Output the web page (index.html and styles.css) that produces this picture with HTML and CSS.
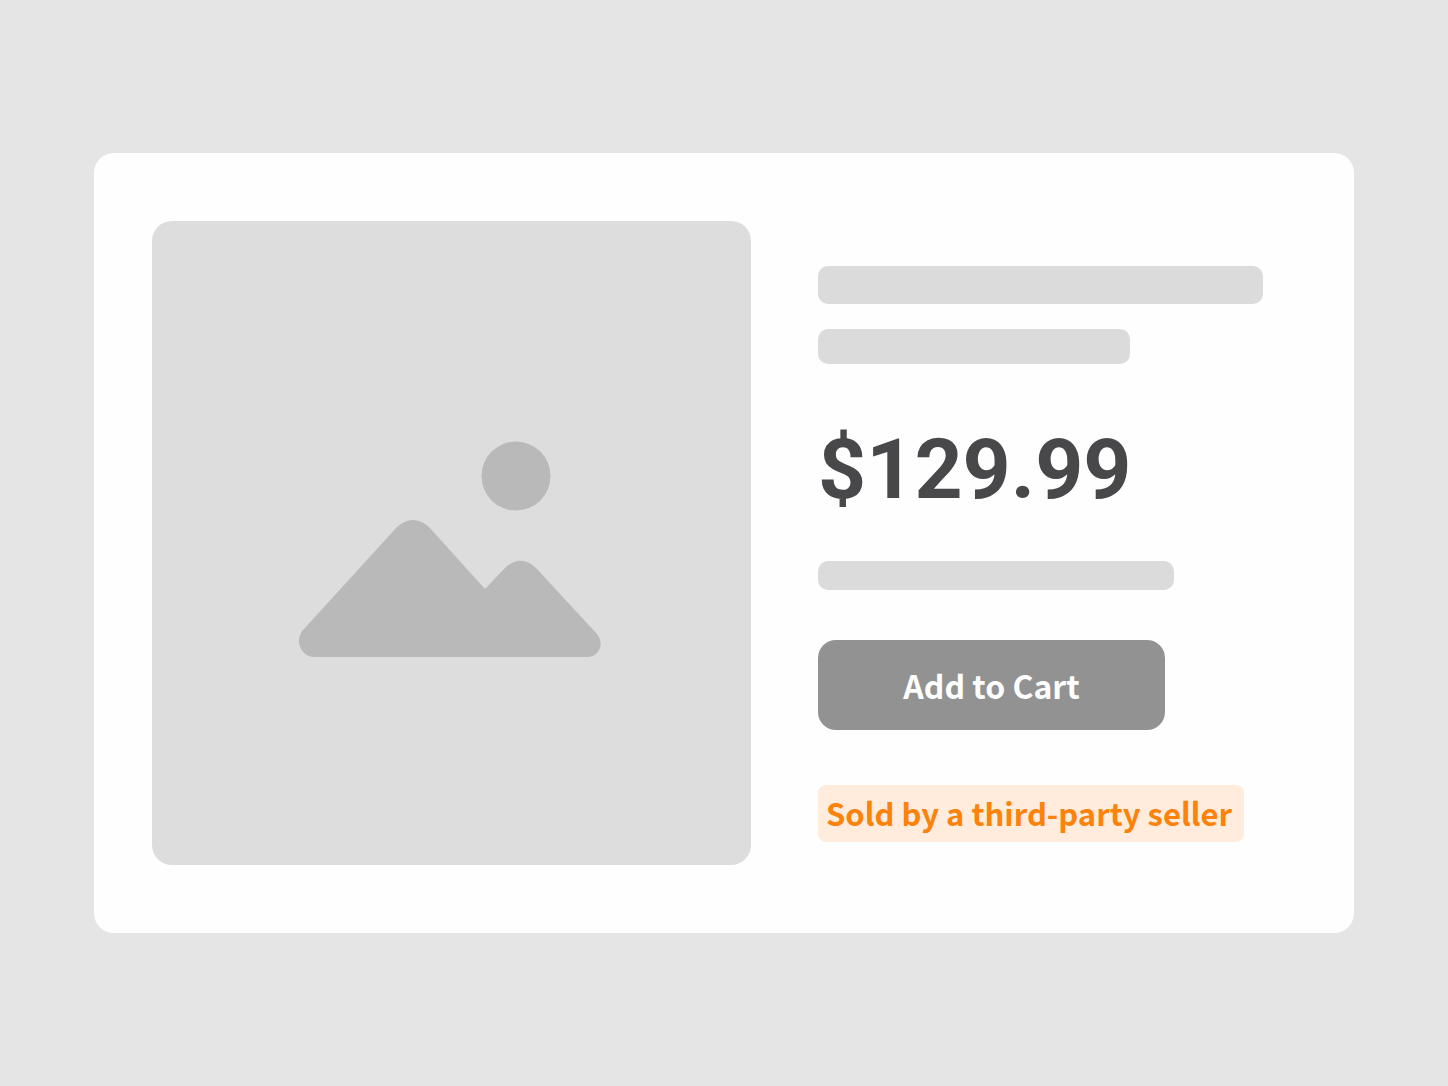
FILE: index.html
```html
<!DOCTYPE html>
<html lang="en">
<head>
<meta charset="utf-8">
<meta name="viewport" content="width=device-width, initial-scale=1">
<title>Product</title>
<link rel="stylesheet" href="styles.css">
</head>
<body>
<main class="card">
  <div class="photo">
    <svg class="photo-icon" viewBox="299 441 302 216" aria-hidden="true">
      <circle cx="516" cy="476" r="34.5"/>
      <path d="M397 527Q413 513 429 527L485 589L504 569Q520 553 536 568L597 634C605 644 599 657 587 657H315C301 657 294 641 303 630Z"/>
    </svg>
  </div>
  <section class="details">
    <div class="bar bar-title"></div>
    <div class="bar bar-subtitle"></div>
    <p class="price">$129.99</p>
    <div class="bar bar-note"></div>
    <button class="cart" type="button">Add to Cart</button>
    <p class="seller">Sold by a third-party seller</p>
  </section>
</main>
</body>
</html>
```

FILE: styles.css
```css
* {
  box-sizing: border-box;
}

body {
  margin: 0;
  min-height: 100vh;
  display: flex;
  align-items: center;
  padding: 48px 94px;
  background: #e5e5e5;
  font-family: "Noto Sans CJK SC", "Noto Sans", sans-serif;
}

.card {
  flex: 1;
  display: grid;
  grid-template-columns: minmax(0, 599fr) minmax(0, 445fr);
  column-gap: 67px;
  padding: 68px 91px 68px 58px;
  border-radius: 20px;
  background: #fefefe;
}

.photo {
  display: flex;
  align-items: center;
  justify-content: center;
  min-height: 644px;
  padding: 12px 4px 0 0;
  border-radius: 20px;
  background: #dddddd;
}

.photo-icon {
  width: 302px;
  max-width: 60%;
  fill: #b9b9b9;
}

.details {
  display: flex;
  flex-direction: column;
  align-items: flex-start;
  padding-top: 45px;
}

.bar {
  border-radius: 10px;
  background: #dbdbdb;
}

.bar-title {
  width: 100%;
  height: 38px;
}

.bar-subtitle {
  width: 70%;
  height: 35px;
  margin-top: 25px;
}

.bar-note {
  width: 80%;
  height: 29px;
}

.price {
  margin: 58px 0 43px;
  color: #48484a;
  font-family: Roboto, sans-serif;
  font-size: 84px;
  font-weight: 700;
  line-height: 96px;
}

.cart {
  width: 78%;
  height: 90px;
  margin-top: 50px;
  padding: 0;
  border: 0;
  border-radius: 18px;
  background: #929292;
  color: #fefefe;
  font-family: inherit;
  font-size: 32px;
  font-weight: 700;
  line-height: 48px;
}

.seller {
  margin: 55px 0 0;
  padding: 4px 12px 5px 8px;
  border-radius: 8px;
  background: #ffecdd;
  color: #fb820b;
  font-size: 31px;
  font-weight: 700;
  line-height: 48px;
  white-space: nowrap;
}
```
